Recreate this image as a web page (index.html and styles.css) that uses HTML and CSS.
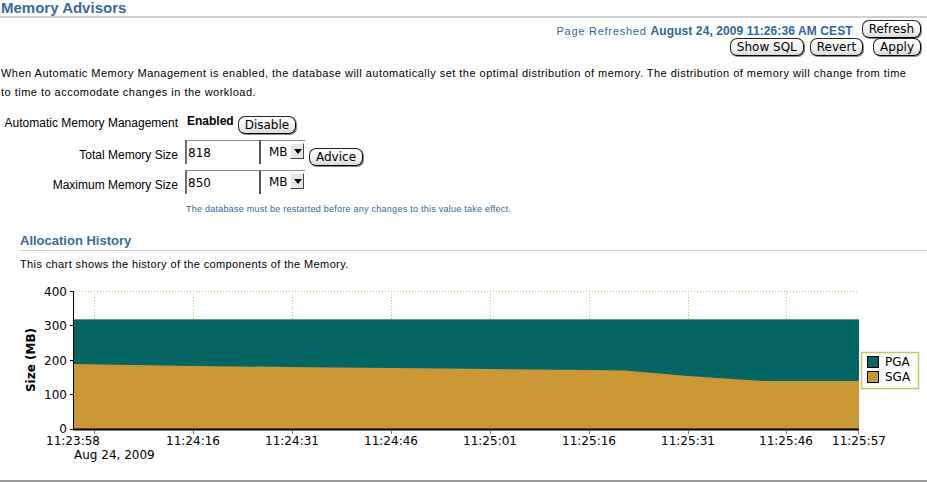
FILE: index.html
```html
<!DOCTYPE html>
<html lang="en">
<head>
	<meta charset="UTF-8">
	<title>Memory Advisors</title>
	<link rel="stylesheet" href="styles.css">
</head>
<body>
	<h1 class="page-title">Memory Advisors</h1>
	<div class="toolbar">
		<div class="toolbar-row">
			<span class="refresh-label">Page Refreshed</span>
			<span class="refresh-time">August 24, 2009 11:26:36 AM CEST</span>
			<button class="btn btn-refresh">Refresh</button>
		</div>
		<div class="toolbar-row">
			<button class="btn">Show SQL</button>
			<button class="btn btn-revert">Revert</button>
			<button class="btn btn-apply">Apply</button>
		</div>
	</div>
	<p class="intro">When Automatic Memory Management is enabled, the database will automatically set the optimal distribution of memory. The distribution of memory will change from time to time to accomodate changes in the workload.</p>

	<div class="settings">
		<div class="settings-label settings-label-first">Automatic Memory Management</div>
		<div class="settings-value">
			<span class="status">Enabled</span>
			<button class="btn">Disable</button>
		</div>

		<div class="settings-label">Total Memory Size</div>
		<div class="settings-value">
			<div class="field">
				<input class="field-input" type="text" value="818">
				<div class="unit-select">MB<span class="unit-arrow"></span></div>
			</div>
			<button class="btn btn-advice">Advice</button>
		</div>

		<div class="settings-label">Maximum Memory Size</div>
		<div class="settings-value">
			<div class="field">
				<input class="field-input" type="text" value="850">
				<div class="unit-select">MB<span class="unit-arrow"></span></div>
			</div>
		</div>

		<div></div>
		<div class="settings-note">The database must be restarted before any changes to this value take effect.</div>
	</div>

	<h2 class="section-title">Allocation History</h2>
	<p class="section-desc">This chart shows the history of the components of the Memory.</p>

	<div class="chart">
		<svg width="927" height="200" viewBox="0 280 927 200">
			<!-- plot areas -->
			<rect x="73" y="319" width="786" height="110" fill="#046563"/>
			<polygon fill="#ca9935" points="73,364 193,366 292,367 391,368 490,369 589,370 625,370.5 688,376 740,379.5 765,381 859,381 859,429 73,429"/>
			<line x1="73" y1="319.5" x2="859" y2="319.5" stroke="#5f9b98" stroke-width="1"/>

			<!-- grid -->
			<g stroke="#c8c864" stroke-width="1" stroke-dasharray="1,2">
				<line x1="73" y1="291.5" x2="859" y2="291.5"/>
				<line x1="94.5" y1="291" x2="94.5" y2="319"/>
				<line x1="193.5" y1="291" x2="193.5" y2="319"/>
				<line x1="292.5" y1="291" x2="292.5" y2="319"/>
				<line x1="391.5" y1="291" x2="391.5" y2="319"/>
				<line x1="490.5" y1="291" x2="490.5" y2="319"/>
				<line x1="589.5" y1="291" x2="589.5" y2="319"/>
				<line x1="688.5" y1="291" x2="688.5" y2="319"/>
				<line x1="786.5" y1="291" x2="786.5" y2="319"/>
			</g>

			<!-- axes -->
			<g stroke="#000" stroke-width="1">
				<line x1="73.5" y1="291" x2="73.5" y2="430"/>
				<line x1="73" y1="429.5" x2="859" y2="429.5" stroke-width="2"/>
				<line x1="70" y1="291.5" x2="73" y2="291.5"/>
				<line x1="70" y1="325.5" x2="73" y2="325.5"/>
				<line x1="70" y1="360.5" x2="73" y2="360.5"/>
				<line x1="70" y1="394.5" x2="73" y2="394.5"/>
				<line x1="70" y1="429.5" x2="73" y2="429.5"/>
			</g>
			<g stroke="#777" stroke-width="1">
				<line x1="94.5" y1="430" x2="94.5" y2="434"/>
				<line x1="193.5" y1="430" x2="193.5" y2="434"/>
				<line x1="292.5" y1="430" x2="292.5" y2="434"/>
				<line x1="391.5" y1="430" x2="391.5" y2="434"/>
				<line x1="490.5" y1="430" x2="490.5" y2="434"/>
				<line x1="589.5" y1="430" x2="589.5" y2="434"/>
				<line x1="688.5" y1="430" x2="688.5" y2="434"/>
				<line x1="786.5" y1="430" x2="786.5" y2="434"/>
				<line x1="858.5" y1="430" x2="858.5" y2="434"/>
			</g>

			<!-- y labels -->
			<g class="axis-text" text-anchor="end">
				<text x="67" y="296">400</text>
				<text x="67" y="330">300</text>
				<text x="67" y="365">200</text>
				<text x="67" y="399">100</text>
				<text x="67" y="433">0</text>
			</g>
			<text class="axis-title" transform="translate(35 360) rotate(-90)" text-anchor="middle">Size (MB)</text>

			<!-- x labels -->
			<g class="axis-text" text-anchor="middle">
				<text x="73" y="445">11:23:58</text>
				<text x="193" y="445">11:24:16</text>
				<text x="292" y="445">11:24:31</text>
				<text x="391" y="445">11:24:46</text>
				<text x="490" y="445">11:25:01</text>
				<text x="589" y="445">11:25:16</text>
				<text x="688" y="445">11:25:31</text>
				<text x="786" y="445">11:25:46</text>
				<text x="859" y="445">11:25:57</text>
			</g>
			<text class="axis-text" x="74" y="459">Aug 24, 2009</text>

			<!-- legend -->
			<rect x="861.5" y="352.5" width="57" height="36" fill="#fff" stroke="#c8c864" stroke-width="1.5"/>
			<rect x="867.5" y="356.5" width="11" height="11" fill="#046563" stroke="#000"/>
			<rect x="867.5" y="371.5" width="11" height="11" fill="#ca9935" stroke="#000"/>
			<text class="axis-text" x="885" y="366">PGA</text>
			<text class="axis-text" x="885" y="381">SGA</text>
		</svg>
	</div>
	<div class="footer-rule"></div>
</body>
</html>
```

FILE: styles.css
```css
*{
	margin: 0;
	padding: 0;
	box-sizing: border-box;
}
body{
	font-family: "Liberation Sans", Arial, sans-serif;
	font-size: 11px;
	color: #000;
	background: #fff;
	width: 927px;
	height: 482px;
	overflow: hidden;
}
.page-title{
	font-size: 15px;
	font-weight: bold;
	color: #3a6a9c;
	height: 18px;
	line-height: 15px;
	padding-left: 1px;
	border-bottom: 2px solid #cfcfcf;
}
.btn{
	font-family: "DejaVu Sans", sans-serif;
	font-size: 12px;
	height: 18px;
	line-height: 15px;
	padding: 0 6px;
	border: 1px solid #222;
	border-right-color: #000;
	border-bottom-color: #000;
	border-radius: 7px;
	background: linear-gradient(#fff, #f2f2f2 60%, #d8d8d8);
	box-shadow: 1px 1px 0 #888;
	color: #000;
	cursor: pointer;
}
.toolbar{
	display: flex;
	flex-direction: column;
	align-items: flex-end;
	padding-right: 6px;
	padding-top: 2px;
}
.toolbar-row{
	display: flex;
	align-items: center;
	height: 18px;
}
.refresh-label{
	color: #336699;
	letter-spacing: 0.75px;
	margin-right: 4px;
	padding-top: 4px;
}
.refresh-time{
	color: #336699;
	font-weight: bold;
	font-size: 12px;
	letter-spacing: 0.1px;
	padding-top: 4px;
}
.btn-refresh{
	margin-left: 9px;
}
.btn-revert{
	margin-left: 6px;
}
.btn-apply{
	margin-left: 10px;
}
.intro{
	line-height: 19px;
	padding: 8px 10px 0 1px;
	letter-spacing: 0.48px;
}
.settings{
	display: grid;
	grid-template-columns: 178px auto;
	column-gap: 7px;
	margin-top: 11px;
}
.settings-label{
	text-align: right;
	font-size: 12px;
	display: flex;
	align-items: center;
	justify-content: flex-end;
	height: 30px;
}
.settings-label-first{
	height: 27px;
	align-items: flex-start;
	padding-top: 3px;
}
.settings-value{
	display: flex;
	align-items: flex-start;
}
.status{
	font-weight: bold;
	font-size: 12px;
	margin: 1px 4px 0 2px;
}
.settings-value .btn{
	margin-top: 3px;
}
.field{
	display: flex;
	height: 24px;
}
.field-input{
	width: 74px;
	height: 24px;
	border: none;
	border-top: 1px solid #8a8a8a;
	border-left: 2px solid #6e6e6e;
	font-family: "DejaVu Sans", sans-serif;
	font-size: 12px;
	padding-left: 1px;
	outline: none;
}
.unit-select{
	width: 46px;
	height: 24px;
	border-left: 2px solid #555;
	border-top: 1px solid #8a8a8a;
	font-family: "DejaVu Sans", sans-serif;
	font-size: 12px;
	display: flex;
	align-items: flex-start;
	padding: 4px 0 0 8px;
	position: relative;
}
.unit-arrow{
	position: absolute;
	right: 1px;
	top: 2px;
	width: 14px;
	height: 16px;
	border: 1px solid;
	border-color: #fff #444 #444 #fff;
	background: #e6e6e6;
}
.unit-arrow::after{
	content: "";
	position: absolute;
	left: 3px;
	top: 5px;
	border-left: 4px solid transparent;
	border-right: 4px solid transparent;
	border-top: 5px solid #000;
}
.settings-value .btn-advice{
	margin: 8px 0 0 4px;
}
.settings-note{
	color: #336699;
	font-size: 9px;
	letter-spacing: 0.25px;
	margin-top: 4px;
	padding-left: 1px;
}
.section-title{
	font-size: 13px;
	font-weight: bold;
	color: #3a6a9c;
	margin: 20px 0 0 20px;
	height: 17px;
	line-height: 14px;
	border-bottom: 1px solid #cfcfcf;
}
.section-desc{
	margin: 7px 0 0 20px;
	letter-spacing: 0.38px;
}
.chart{
	margin-top: 10px;
	height: 200px;
}
.chart svg{
	display: block;
}
.axis-text{
	font-family: "DejaVu Sans", sans-serif;
	font-size: 12px;
	fill: #000;
}
.axis-title{
	font-family: "DejaVu Sans", sans-serif;
	font-size: 12px;
	font-weight: bold;
	fill: #000;
}
.footer-rule{
	height: 2px;
	background: #9a9a9a;
}
```
